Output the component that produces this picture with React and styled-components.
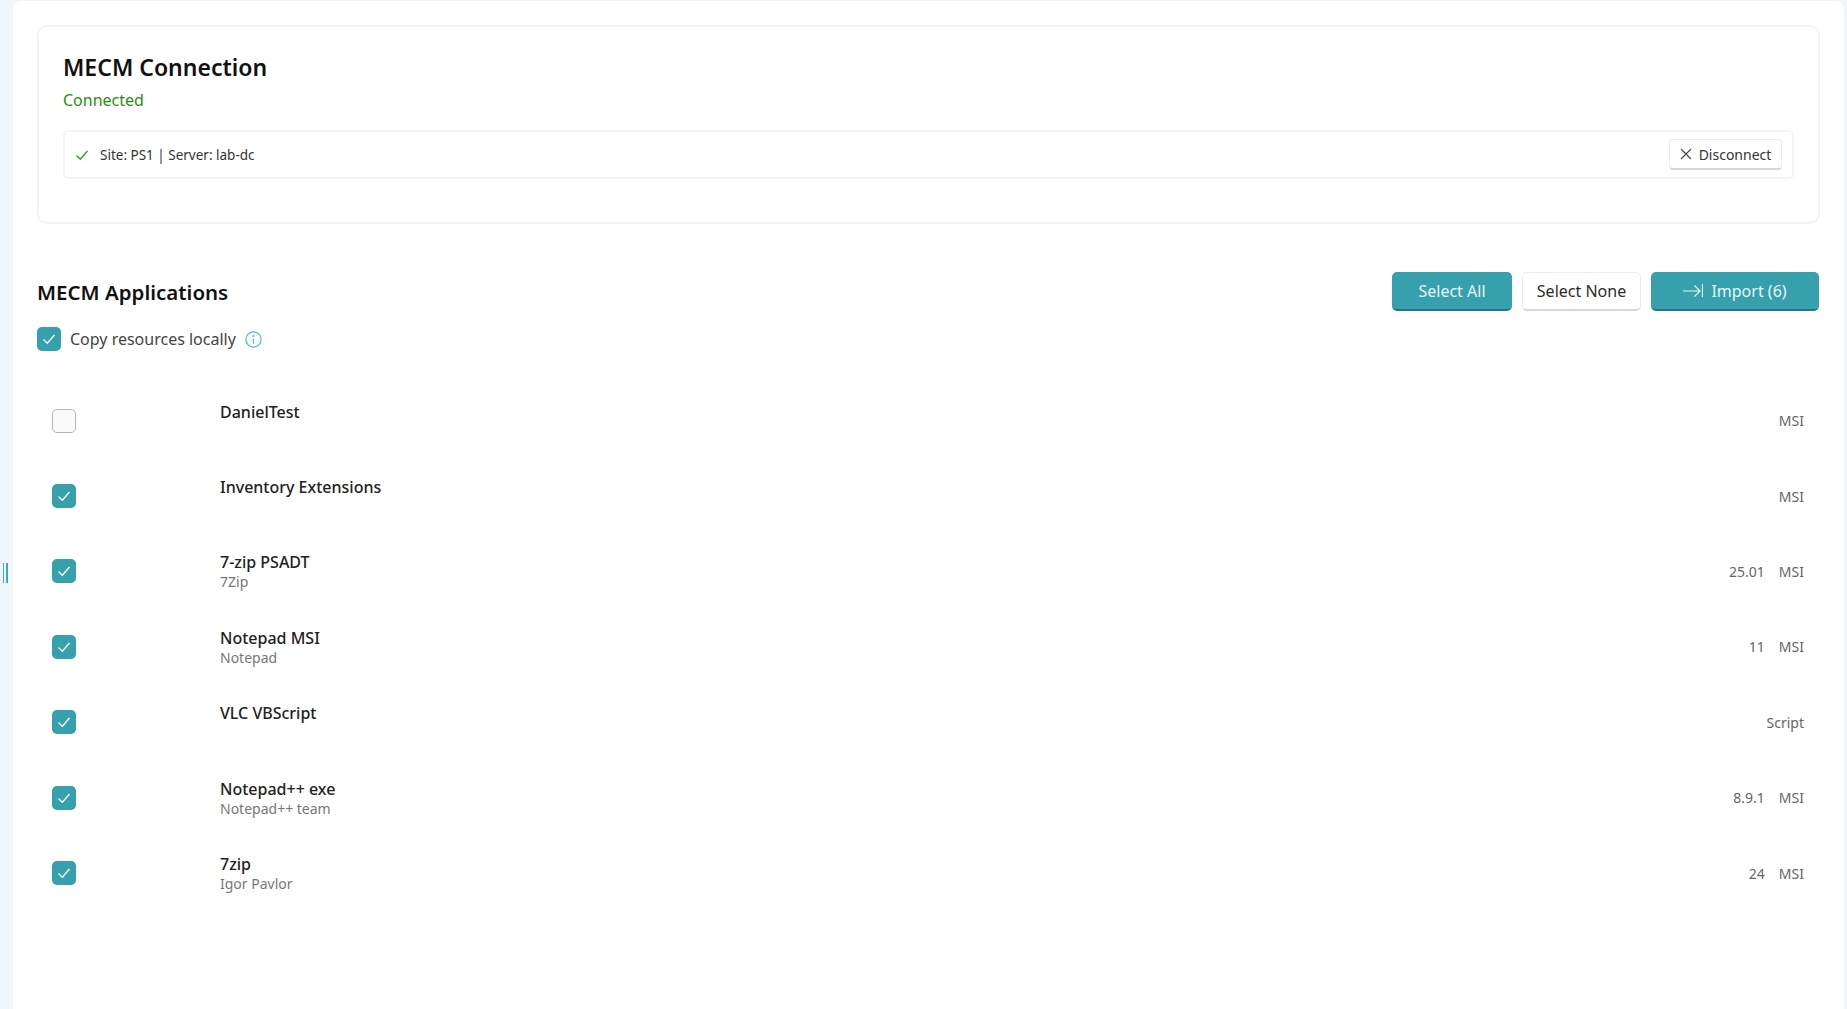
import React from 'react';
import styled, { createGlobalStyle } from 'styled-components';

const GlobalStyle = createGlobalStyle`
    html, body {
        margin: 0;
        height: 100%;
        background: #f0f6fd;
        font-family: "Noto Sans", "Open Sans", "Liberation Sans", sans-serif;
        color: #1b1b1b;
    }
    #root { height: 100%; }
`;

const Shell = styled.div`
    height: 1009px;
    display: flex;
    overflow: hidden;
    position: relative;
`;

const Rail = styled.div`
    width: 13px;
    flex: none;
    display: flex;
    justify-content: center;
    align-items: center;
    padding-top: 137px;
    box-sizing: border-box;
    gap: 2px;
    padding-right: 3px;
`;

const Grip = styled.span`
    width: 1.5px;
    height: 20px;
    background: #3fa9b5;
`;

const Main = styled.main`
    flex: 1;
    margin-right: 3px;
    background: #fff;
    border-radius: 8px 8px 0 0;
    border-top: 1px solid #f1f2f3;
    padding: 24px 24px 0 24px;
    box-sizing: border-box;
`;

const Card = styled.section`
    height: 199px;
    box-sizing: border-box;
    border: 2px solid #f3f3f3;
    border-radius: 10px;
    padding: 24px 24px 0;
`;

const CardTitle = styled.h2`
    margin: 0;
    font-size: 23px;
    line-height: 32px;
    font-weight: 600;
    color: #111;
`;

const Status = styled.div`
    margin-top: 5px;
    font-size: 16px;
    line-height: 24px;
    color: #2a8f12;
`;

const InfoBar = styled.div`
    margin-top: 18px;
    height: 49px;
    box-sizing: border-box;
    border: 2px solid #f4f4f4;
    border-radius: 5px;
    display: flex;
    align-items: center;
    padding: 0 10px;
    gap: 11px;
`;

const SiteText = styled.span`
    flex: 1;
    font-size: 13.5px;
    color: #333;
`;

const SmallButton = styled.button`
    height: 31px;
    width: 113px;
    box-sizing: border-box;
    display: flex;
    align-items: center;
    justify-content: center;
    gap: 7px;
    background: #fff;
    border: 1px solid #ececec;
    border-bottom: 2px solid #d8d8d8;
    border-radius: 4px;
    font: inherit;
    font-size: 14px;
    color: #333;
    padding: 0;
`;

const SectionHead = styled.div`
    margin-top: 48px;
    height: 39px;
    display: flex;
    align-items: center;
    justify-content: space-between;
`;

const SectionTitle = styled.h3`
    margin: 0;
    font-size: 20.5px;
    font-weight: 600;
    color: #111;
`;

const Actions = styled.div`
    display: flex;
    gap: 10px;
    margin-right: 1px;
`;

const ActionButton = styled.button`
    height: 39px;
    width: ${p => p.$width}px;
    box-sizing: border-box;
    display: flex;
    align-items: center;
    justify-content: center;
    gap: 8px;
    border-radius: 5px;
    font: inherit;
    font-size: 16px;
    padding: 0;
    background: ${p => (p.$primary ? '#36a0ac' : '#fff')};
    color: ${p => (p.$primary ? '#e8f7f8' : '#2b2b2b')};
    border: 1px solid ${p => (p.$primary ? '#36a0ac' : '#ececec')};
    border-bottom: 2px solid ${p => (p.$primary ? '#24757f' : '#d8d8d8')};
`;

const CopyRow = styled.div`
    margin-top: 16px;
    display: flex;
    align-items: center;
    height: 24px;
    gap: 9px;
`;

const CopyLabel = styled.span`
    font-size: 16px;
    color: #444;
`;

const Box = styled.span`
    width: 24px;
    height: 24px;
    flex: none;
    box-sizing: border-box;
    border-radius: 5px;
    display: flex;
    align-items: center;
    justify-content: center;
    background: ${p => (p.$on ? '#36a0ac' : '#fafafa')};
    border: ${p => (p.$on ? 'none' : '1.5px solid #b5b5b5')};
`;

const AppList = styled.div`
    margin-top: 32px;
    display: flex;
    flex-direction: column;
`;

const AppRow = styled.div`
    height: 75.4px;
    padding: 0 16px 0 15px;
    display: flex;
    align-items: center;
`;

const AppText = styled.div`
    margin-left: 144px;
    flex: 1;
    height: 40px;
`;

const AppName = styled.div`
    font-size: 16px;
    line-height: 22px;
    font-weight: 500;
    color: #222;
`;

const AppVendor = styled.div`
    font-size: 14px;
    line-height: 18px;
    color: #777;
`;

const Meta = styled.span`
    font-size: 14px;
    color: #666;
    margin-left: 14px;
`;

const apps = [
    { name: 'DanielTest', type: 'MSI' },
    { name: 'Inventory Extensions', type: 'MSI', on: true },
    { name: '7-zip PSADT', vendor: '7Zip', version: '25.01', type: 'MSI', on: true },
    { name: 'Notepad MSI', vendor: 'Notepad', version: '11', type: 'MSI', on: true },
    { name: 'VLC VBScript', type: 'Script', on: true },
    { name: 'Notepad++ exe', vendor: 'Notepad++ team', version: '8.9.1', type: 'MSI', on: true },
    { name: '7zip', vendor: 'Igor Pavlor', version: '24', type: 'MSI', on: true },
];

const Tick = ({ color = '#fff', size = 14 }) => (
    <svg width={size} height={size} viewBox="0 0 14 14" fill="none" stroke={color} strokeWidth="1.3">
        <path d="M1.5 7.5 L5.3 11.2 L12.5 3" />
    </svg>
);

const CloseIcon = () => (
    <svg width="12" height="12" viewBox="0 0 12 12" stroke="#444" strokeWidth="1.1">
        <path d="M1 1 L11 11 M11 1 L1 11" />
    </svg>
);

const ImportIcon = () => (
    <svg width="20" height="14" viewBox="0 0 20 14" fill="none" stroke="#e8f7f8" strokeWidth="1.2">
        <path d="M0 7 H17 M11.5 1.5 L17 7 L11.5 12.5 M19.5 0 V13" />
    </svg>
);

const InfoIcon = () => (
    <svg width="17" height="17" viewBox="0 0 17 17" fill="none" stroke="#45bfd0" strokeWidth="1.2">
        <circle cx="8.5" cy="8.5" r="7.6" />
        <path d="M8.5 7.4 V12.6" />
        <circle cx="8.5" cy="5" r="0.5" fill="#45bfd0" />
    </svg>
);

export default function App() {
    return (
        <Shell>
            <GlobalStyle />
            <Rail>
                <Grip />
                <Grip />
            </Rail>
            <Main>
                <Card>
                    <CardTitle>MECM Connection</CardTitle>
                    <Status>Connected</Status>
                    <InfoBar>
                        <Tick color="#2f9e14" />
                        <SiteText>Site: PS1 | Server: lab-dc</SiteText>
                        <SmallButton>
                            <CloseIcon />
                            Disconnect
                        </SmallButton>
                    </InfoBar>
                </Card>
                <SectionHead>
                    <SectionTitle>MECM Applications</SectionTitle>
                    <Actions>
                        <ActionButton $primary $width={120}>Select All</ActionButton>
                        <ActionButton $width={119}>Select None</ActionButton>
                        <ActionButton $primary $width={168}>
                            <ImportIcon />
                            Import (6)
                        </ActionButton>
                    </Actions>
                </SectionHead>
                <CopyRow>
                    <Box $on><Tick /></Box>
                    <CopyLabel>Copy resources locally</CopyLabel>
                    <InfoIcon />
                </CopyRow>
                <AppList>
                    {apps.map(app => (
                        <AppRow key={app.name}>
                            <Box $on={app.on}>{app.on && <Tick />}</Box>
                            <AppText>
                                <AppName>{app.name}</AppName>
                                {app.vendor && <AppVendor>{app.vendor}</AppVendor>}
                            </AppText>
                            {app.version && <Meta>{app.version}</Meta>}
                            <Meta>{app.type}</Meta>
                        </AppRow>
                    ))}
                </AppList>
            </Main>
        </Shell>
    );
}
